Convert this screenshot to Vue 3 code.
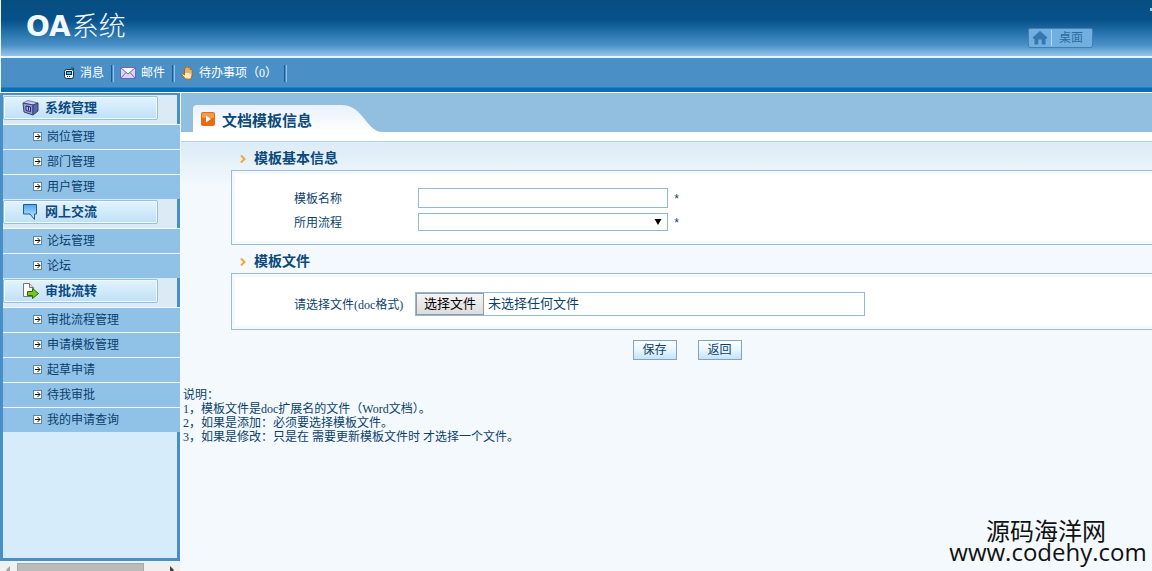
<script setup>
import { ref } from 'vue'

const menus = [
  { name: '系统管理', icon: 'server', children: ['岗位管理', '部门管理', '用户管理'] },
  { name: '网上交流', icon: 'forum', children: ['论坛管理', '论坛'] },
  { name: '审批流转', icon: 'flow', children: ['审批流程管理', '申请模板管理', '起草申请', '待我审批', '我的申请查询'] }
]

const name = ref('')
const process = ref('')
const fileName = ref('')

const onFileChange = (e) => {
  fileName.value = e.target.files[0]?.name || ''
}
</script>

<template>
  <div class="page">
    <header class="header">
      <div class="banner">
        <h1 class="logo"><b>OA</b>系统</h1>
        <a href="#" class="desktop">
          <svg width="22" height="18" viewBox="0 0 22 18">
            <path d="M11 2 L18.500 8.500 L17 10 L16.500 9.500 V15.500 H12.700 V10.500 H9.300 V15.500 H5.500 V9.500 L5 10 L3.500 8.500 Z" fill="#3477ac" />
          </svg>
          <span>桌面</span>
        </a>
        <i class="spark"></i>
      </div>
      <nav class="toolbar">
        <a href="#" class="tool">
          <svg width="11" height="14" viewBox="0 0 11 14">
            <path d="M7 2 H9.500 V4" fill="none" stroke="#14405e" />
            <rect x="0.500" y="3.500" width="9" height="9" rx="2" fill="#e6f1f8" stroke="#14303e" />
            <rect x="2.500" y="5.500" width="5" height="3" fill="#35c3f0" stroke="#123" />
            <path d="M3 10.500 h4" stroke="#14405e" stroke-dasharray="1 1" />
          </svg>
          <span>消息</span>
        </a>
        <a href="#" class="tool">
          <svg width="16" height="12" viewBox="0 0 16 12">
            <rect x="0.500" y="0.500" width="15" height="11" fill="#d9d5fa" stroke="#7466bd" />
            <path d="M1 1 L8 7 L15 1 M1 11 L6 5.500 M15 11 L10 5.500" fill="none" stroke="#7466bd" />
            <path d="M2 1 L8 6 L14 1 Z" fill="#fff" />
          </svg>
          <span>邮件</span>
        </a>
        <a href="#" class="tool">
          <svg width="13" height="14" viewBox="0 0 13 14">
            <path d="M4.500 13 L0.800 8.800 Q0.600 7.300 2 7.700 L3.500 9 V2.500 Q4.300 1.300 5 2.500 V1.300 Q6 0 7 1.300 V1.800 Q8.200 0.700 9 2 V3.500 Q10.300 2.300 11 4 V10 L9.500 13.300 Z" fill="#ffe9bd" stroke="#a9660f" />
            <path d="M5 2.500 V7 M7 2 V7 M9 3 V7.500" stroke="#c07a20" />
          </svg>
          <span>待办事项&#xFF08;0&#xFF09;</span>
        </a>
      </nav>
    </header>

    <div class="body">
      <aside class="sidebar">
        <div class="menu">
          <section v-for="m in menus" :key="m.name">
            <div class="group">
              <a href="#" class="group-title">
                <svg v-if="m.icon === 'server'" width="18" height="18" viewBox="0 0 18 18">
                  <path d="M1 4 L6 1.500 L16 4 L11 6 Z" fill="#c6cdf6" stroke="#4a4f86" stroke-width="0.700" />
                  <path d="M1 4 L11 6 V16 L2 13 Z" fill="#8f9ad6" stroke="#3a3f74" />
                  <path d="M11 6 L16 4 V12 L11 16 Z" fill="#5a67aa" stroke="#3a3f74" />
                  <path d="M4 7 L8.500 8 V12.500 L4 11.500 Z" fill="#b4bdf0" stroke="#26286a" />
                  <path d="M6.500 8 V11.500" stroke="#26286a" />
                </svg>
                <svg v-else-if="m.icon === 'forum'" width="18" height="18" viewBox="0 0 18 18">
                  <defs>
                    <linearGradient id="bubble" x2="0" y2="1">
                      <stop offset="0" stop-color="#4fa4ee" />
                      <stop offset="1" stop-color="#cdf1ff" />
                    </linearGradient>
                  </defs>
                  <path d="M1.500 1.500 H14.500 V11 H12.500 V16.500 L8 11 H1.500 Z" fill="url(#bubble)" stroke="#1c5d9e" />
                </svg>
                <svg v-else width="18" height="18" viewBox="0 0 18 18">
                  <path d="M1.500 1.500 H7.500 L11.500 5.500 V14.500 H1.500 Z" fill="#fff" stroke="#777" />
                  <path d="M7.500 1.500 V5.500 H11.500" fill="#ddd" stroke="#777" />
                  <path d="M5.500 9.500 H10.500 V6.500 L16.500 11.500 L10.500 16.500 V13.500 H5.500 Z" fill="#7bc61a" stroke="#2d6b0a" />
                </svg>
                <span>{{ m.name }}</span>
              </a>
            </div>
            <ul class="items">
              <li v-for="c in m.children" :key="c">
                <a href="#">
                  <svg width="9" height="9" viewBox="0 0 9 9">
                    <rect x="0.500" y="0.500" width="8" height="8" fill="#fff" stroke="#5d87a3" />
                    <path d="M2 4.500 H7 M4.500 2 L7 4.500 L4.500 7" fill="none" stroke="#111" />
                  </svg>
                  <span>{{ c }}</span>
                </a>
              </li>
            </ul>
          </section>
        </div>
        <div class="hscroll">
          <svg width="5" height="8" viewBox="0 0 5 8"><path d="M4 0 V8 L0 4 Z" fill="#a3a3a3" /></svg>
          <div class="thumb"></div>
          <svg width="5" height="8" viewBox="0 0 5 8"><path d="M1 0 V8 L5 4 Z" fill="#404040" /></svg>
        </div>
      </aside>

      <main class="main">
        <div class="title-bar">
          <div class="tab">
            <svg width="14" height="14" viewBox="0 0 14 14">
              <rect width="14" height="14" rx="2" fill="#e86b10" />
              <rect x="1" y="1" width="12" height="5" rx="1" fill="#f39a4c" />
              <path d="M5 3.500 L10 7 L5 10.500 Z" fill="#fff" />
            </svg>
            <h2>文档模板信息</h2>
          </div>
          <svg class="tab-edge" width="42" height="27" viewBox="0 0 42 27">
            <defs>
              <linearGradient id="edge" x2="0" y2="1">
                <stop offset="0" stop-color="#e9f1fd" />
                <stop offset="1" stop-color="#fff" />
              </linearGradient>
            </defs>
            <path d="M0 0 C10 0 15 4 21 11 C28 19 32 27 42 27 H0 Z" fill="url(#edge)" />
          </svg>
        </div>
        <div class="strip"></div>

        <form class="content" @submit.prevent>
          <h3 class="section-title">
            <svg width="6" height="8" viewBox="0 0 6 8"><path d="M1 0.500 L4.500 4 L1 7.500" fill="none" stroke="#f2a73b" stroke-width="2" /></svg>
            模板基本信息
          </h3>
          <div class="box">
            <div class="row">
              <label for="name">模板名称</label>
              <input id="name" v-model="name" type="text" class="text">
              <span class="star">*</span>
            </div>
            <div class="row">
              <label for="process">所用流程</label>
              <div class="select">
                <select id="process" v-model="process">
                  <option value=""></option>
                </select>
                <svg width="8" height="6" viewBox="0 0 8 6"><path d="M0.500 0 H7.500 L4 6 Z" fill="#000" /></svg>
              </div>
              <span class="star">*</span>
            </div>
          </div>

          <h3 class="section-title">
            <svg width="6" height="8" viewBox="0 0 6 8"><path d="M1 0.500 L4.500 4 L1 7.500" fill="none" stroke="#f2a73b" stroke-width="2" /></svg>
            模板文件
          </h3>
          <div class="box file-box">
            <div class="row">
              <label for="file">请选择文件(doc格式)</label>
              <label class="file">
                <input id="file" type="file" accept=".doc" @change="onFileChange">
                <span class="file-btn">选择文件</span>
                <span>{{ fileName || '未选择任何文件' }}</span>
              </label>
            </div>
          </div>

          <div class="actions">
            <button type="submit">保存</button>
            <button type="button">返回</button>
          </div>
        </form>

        <div class="notes">
          <p>说明&#xFF1A;</p>
          <p>1&#xFF0C;模板文件是doc扩展名的文件&#xFF08;Word文档&#xFF09;。</p>
          <p>2&#xFF0C;如果是添加&#xFF1A;必须要选择模板文件。</p>
          <p>3&#xFF0C;如果是修改&#xFF1A;只是在 需要更新模板文件时 才选择一个文件。</p>
        </div>
      </main>
    </div>

    <div class="watermark">
      <div>源码海洋网</div>
      <div class="site">www.codehy.com</div>
    </div>
  </div>
</template>

<style>
body { margin: 0; background: #f3f9fd; }
</style>

<style scoped>
* { box-sizing: border-box; }
h1, h2, h3, p, ul { margin: 0; padding: 0; }
svg { display: block; flex: none; }
a { text-decoration: none; color: inherit; }

.page { position: relative; display: flex; flex-direction: column; height: 100vh; overflow: hidden; font: 12px/14px "Liberation Serif", "Noto Sans CJK SC", sans-serif; color: #0b3f6c; }

/* 顶部 */
.header { border-left: 1px solid #eef5fa; }
.banner { position: relative; display: flex; justify-content: space-between; align-items: center; height: 56px; padding: 0 59px 0 25px; background: linear-gradient(#064e80 0, #07518a 20px, #2470a8 32px, #4a90c8 45px, #94c4e8 56px); }
.logo { margin-bottom: 4px; font: 300 27px/40px "Noto Sans CJK SC", sans-serif; color: #f1f9ff; }
.logo b { margin-right: 1px; font: bold 28px/40px "DejaVu Sans", sans-serif; }
.desktop { display: flex; align-items: center; height: 20px; margin-top: 20px; border: 1px solid #3f80b5; border-radius: 2px; background: #70afe0; color: #2c6da2; }
.desktop span { padding: 0 9px 0 7px; border-left: 1px solid #b5daf5; line-height: 16px; }
.spark { position: absolute; right: 0; top: 8px; width: 2px; height: 3px; background: #a9d0ea; }
.toolbar { display: flex; align-items: center; height: 37px; padding: 0 0 4px 55px; border-top: 2px solid #e8f3fa; border-bottom: 1px solid #fff; background: linear-gradient(#4a90c7 0, #4a90c7 29px, #0a6db9 30px, #0a6db9 34px); color: #fff; }
.tool { display: flex; align-items: center; height: 17px; padding: 0 7px 0 8px; border-right: 1px solid #125d98; box-shadow: 1px 0 0 #4a90c7, 2px 0 0 #8fc3ea; }
.tool span { margin-left: 5px; }

/* 左侧菜单 */
.body { display: flex; flex: 1; min-height: 0; }
.sidebar { display: flex; flex-direction: column; flex: none; width: 180px; }
.menu { flex: 1; border: 3px solid #4a8fc3; border-top-width: 2px; background: #d7ecfa; }
.group { height: 29px; padding: 1px 19px 0 0; background: #dbeaf5; }
.group-title { display: flex; align-items: center; height: 24px; padding-left: 18px; border: 1px solid #94c0e0; border-radius: 2px; box-shadow: inset 0 0 0 1px #eff9ff; background: linear-gradient(#e3f3fd, #bfe0f7); color: #0b4a80; font-size: 13px; font-weight: bold; }
.group-title span { margin-left: 5px; }
.items { margin-right: -3px; list-style: none; }
.items a { display: flex; align-items: center; height: 25px; padding: 0 0 1px 30px; border-top: 1px solid #f2faff; background: #90c2e8; }
.items span { margin-left: 5px; }
.hscroll { display: flex; justify-content: space-between; height: 10px; padding: 2px 6px 0; background: #f0f0f0; overflow: hidden; }
.hscroll svg { margin-top: 3px; }
.thumb { width: 127px; margin-right: 20px; height: 17px; background: #bbb; border: 1px solid #a8a8a8; }

/* 内容区 */
.main { flex: 1; min-width: 0; margin-left: 1px; background: #f3f9fd; }
.title-bar { display: flex; align-items: flex-end; height: 39px; padding-left: 12px; background: #92bee0; }
.tab { display: flex; align-items: center; height: 27px; padding-left: 8px; border-radius: 4px 0 0 0; background: linear-gradient(#e9f1fd, #fff); }
.tab h2 { margin: 4px 29px 0 7px; font-size: 15px; line-height: 20px; color: #0b4a7a; }
.strip { height: 10px; background: #fff; border-bottom: 1px solid #b5d4ea; }
.content { padding-left: 50px; background: linear-gradient(#dcebf6, #f3f9fd 44px); }
.section-title { display: flex; align-items: center; gap: 8px; height: 28px; padding: 6px 0 0 9px; font-size: 14px; line-height: 20px; color: #0b4a7a; }
.box { padding: 15px 0 10px 59px; border: 1px solid #9dbad3; border-right: 0; background: #fff; box-shadow: inset 3px 3px 0 #f3f9fd, inset 0 -3px 0 #f3f9fd; }
.file-box { padding-top: 18px; padding-bottom: 13px; }
.row { display: flex; align-items: center; height: 24px; padding-left: 3px; }
.row label:first-child { flex: none; width: 124px; padding-top: 2px; }
.text { width: 250px; height: 20px; padding: 0 4px; border: 1px solid #94b9d6; background: #fff; font: inherit; }
.select { position: relative; width: 250px; }
.select select { display: block; width: 100%; height: 18px; padding: 0 4px; border: 1px solid #94b9d6; border-radius: 0; background: #fff; appearance: none; font: inherit; }
.select svg { position: absolute; right: 6px; top: 6px; pointer-events: none; }
.star { margin: 4px 0 0 5px; font-family: "Liberation Mono", monospace; }
.file { display: flex; align-items: center; width: 450px; height: 24px; margin-left: -3px; border: 1px solid #94b9d6; background: #fff; font-size: 13px; position: relative; }
.file input { position: absolute; width: 100%; height: 100%; opacity: 0; cursor: pointer; }
.file-btn { margin-right: 4px; padding: 3px 7px; border: 1px solid #999; background: linear-gradient(#f5f5f5, #dcdcdc); color: #000; }
.actions { display: flex; justify-content: center; gap: 21px; padding: 10px 9px 0 0; }
.actions button { width: 44px; height: 20px; padding: 0; border: 1px solid #7fa4c4; background: linear-gradient(#fff, #e8f5ff 50%, #c3e3fa); color: #0b3f6c; font: inherit; }
.notes { padding: 28px 0 0 2px; }

.watermark { position: absolute; right: 4px; bottom: 10px; width: 200px; text-align: center; color: #111; font: 24px/24px "Noto Sans CJK SC", sans-serif; }
.watermark div:first-child { margin-right: 4px; }
.site { font: 24px/19px "Open Sans", sans-serif; }
</style>
